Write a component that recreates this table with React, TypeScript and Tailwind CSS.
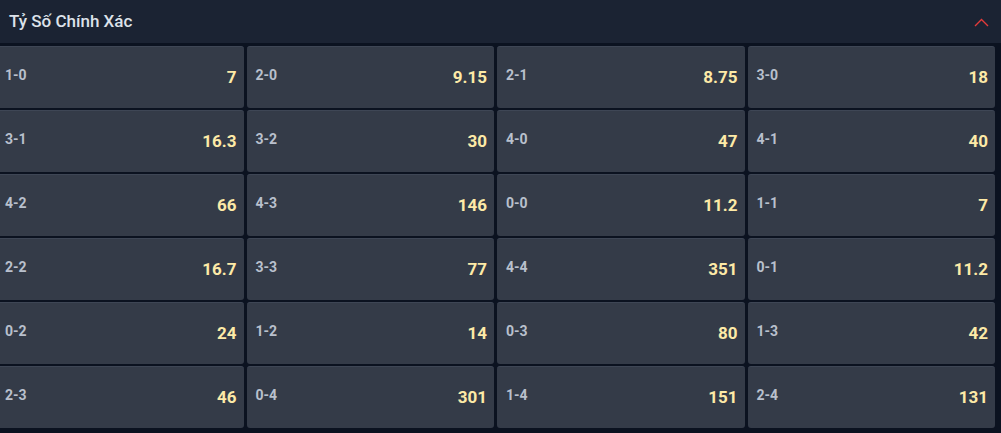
const odds: [string, string][] = [
  ["1-0", "7"], ["2-0", "9.15"], ["2-1", "8.75"], ["3-0", "18"],
  ["3-1", "16.3"], ["3-2", "30"], ["4-0", "47"], ["4-1", "40"],
  ["4-2", "66"], ["4-3", "146"], ["0-0", "11.2"], ["1-1", "7"],
  ["2-2", "16.7"], ["3-3", "77"], ["4-4", "351"], ["0-1", "11.2"],
  ["0-2", "24"], ["1-2", "14"], ["0-3", "80"], ["1-3", "42"],
  ["2-3", "46"], ["0-4", "301"], ["1-4", "151"], ["2-4", "131"],
];

function OddsCell({ score, price }: { score: string; price: string }) {
  return (
    <button className="flex h-[62px] items-center justify-between rounded-[3px] border-t border-[#3e4655] bg-[#343b48] pl-[9px] pr-[7px]">
      <span className="mb-[5px] text-[14px] font-bold text-[#b9c0cd]">{score}</span>
      <span className="text-[17px] font-bold text-[#fdeaa7]">{price}</span>
    </button>
  );
}

export default function App() {
  return (
    <div className="w-[1001px] h-[433px] overflow-hidden bg-[#0b1220] font-['Roboto','Liberation_Sans',sans-serif]">
      {/* header */}
      <div className="flex h-[43px] items-center justify-between bg-[#1b2333] pl-[9px] pr-[12px]">
        <span className="text-[17px] font-medium text-[#dde2ea]">Tỷ Số Chính Xác</span>
        <svg width="15" height="10" viewBox="0 0 15 10" fill="none">
          <polyline points="1,9 7.5,2.5 14,9" stroke="#e43a3a" strokeWidth="1.4" />
        </svg>
      </div>

      {/* score grid */}
      <div className="-ml-1 grid grid-cols-4 gap-x-[3px] gap-y-[2px] pr-[6px] pt-[3px]">
        {odds.map(([score, price]) => (
          <OddsCell key={score} score={score} price={price} />
        ))}
      </div>
    </div>
  );
}
